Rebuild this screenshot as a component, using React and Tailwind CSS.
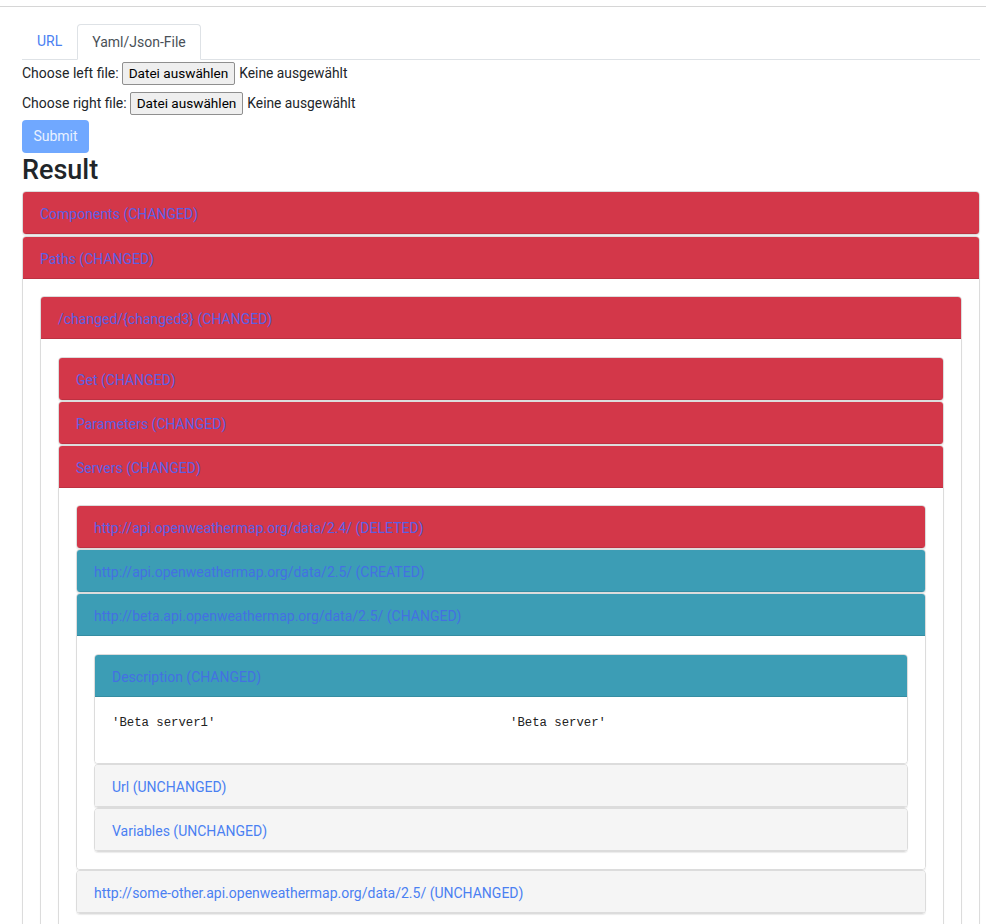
import React from "react";

const tones = {
  red: "bg-[#d33749] text-[#5b5fe3]",
  teal: "bg-[#3c9db5] text-[#4470e2]",
  gray: "bg-[#f5f5f5] text-[#4a80f2]",
};

function Card({ title, tone = "gray", children, gap = "mb-0", bodyTop = "pt-[17px]" }) {
  return (
    <div
      className={`border border-[#dcdcdc] rounded-[4px] overflow-hidden shadow-[0_1px_1px_rgba(0,0,0,0.08)] ${gap}`}
    >
      <div
        className={`h-[42px] pt-[3px] border-b border-black/10 flex items-center px-[17px] text-[14px] ${tones[tone]}`}
      >
        {title}
      </div>
      {children && <div className={`bg-white px-[17px] pb-[17px] ${bodyTop}`}>{children}</div>}
    </div>
  );
}

function FileRow({ label, className }) {
  return (
    <div className={`flex items-center h-[25px] ${className}`}>
      <span>{label}</span>
      <span className="ml-[3px] h-[23px] px-[6px] flex items-center border border-[#8f8f8f] rounded-[2px] bg-[#efefef] text-[13.6px] text-black">
        Datei auswählen
      </span>
      <span className="ml-[4px] text-[13.8px]">Keine ausgewählt</span>
    </div>
  );
}

export default function App() {
  return (
    <div className="min-h-screen bg-white text-[#212529] text-[14px] font-['Roboto','Liberation_Sans',sans-serif]">
      <div className="pt-[6px]">
        <div className="border-t border-[#d6d6d6]" />
      </div>
      <div className="pl-[22px] pr-[6px] pt-[17px]">
        {/* tabs */}
        <div className="flex border-b border-[#dee2e6] h-[36px]">
          <div className="px-[15px] flex items-center text-[#4a80f2]">URL</div>
          <div className="px-[14px] flex items-center text-[#495057] border border-[#dee2e6] border-b-white rounded-t-[4px] -mb-px bg-white">
            Yaml/Json-File
          </div>
        </div>

        {/* file inputs */}
        <FileRow label="Choose left file:" className="mt-px" />
        <FileRow label="Choose right file:" className="mt-[5px]" />
        <div className="mt-[4px]">
          <button className="h-[33px] w-[67px] rounded-[4px] bg-[#70a8ff] text-[#e9f1ff] text-[14px]">
            Submit
          </button>
        </div>

        <h3 className="text-[27px] font-medium leading-[34px] mb-[4px]">Result</h3>

        <Card title="Components (CHANGED)" tone="red" gap="mb-px" />
        <Card title="Paths (CHANGED)" tone="red">
          <Card title="/changed/{changed3} (CHANGED)" tone="red" bodyTop="pt-[18px]">
            <Card title="Get (CHANGED)" tone="red" />
            <Card title="Parameters (CHANGED)" tone="red" />
            <Card title="Servers (CHANGED)" tone="red">
              <Card title="http://api.openweathermap.org/data/2.4/ (DELETED)" tone="red" />
              <Card title="http://api.openweathermap.org/data/2.5/ (CREATED)" tone="teal" />
              <Card
                title="http://beta.api.openweathermap.org/data/2.5/ (CHANGED)"
                tone="teal"
                bodyTop="pt-[18px]"
              >
                <div className="border border-[#dcdcdc] rounded-[4px] overflow-hidden shadow-[0_1px_1px_rgba(0,0,0,0.08)]">
                  <div
                    className={`h-[42px] pt-[3px] border-b border-black/10 flex items-center px-[17px] text-[14px] ${tones.teal}`}
                  >
                    Description (CHANGED)
                  </div>
                  <div className="bg-white px-[17px] pt-[18px] pb-[32px]">
                    <div className="grid grid-cols-2 gap-x-[18px] font-['Liberation_Mono',monospace] text-[12.3px] leading-[16px] text-[#222]">
                      <div>'Beta server1'</div>
                      <div>'Beta server'</div>
                    </div>
                  </div>
                </div>
                <Card title="Url (UNCHANGED)" tone="gray" />
                <Card title="Variables (UNCHANGED)" tone="gray" />
              </Card>
              <Card
                title="http://some-other.api.openweathermap.org/data/2.5/ (UNCHANGED)"
                tone="gray"
              />
            </Card>
          </Card>
        </Card>
      </div>
    </div>
  );
}
